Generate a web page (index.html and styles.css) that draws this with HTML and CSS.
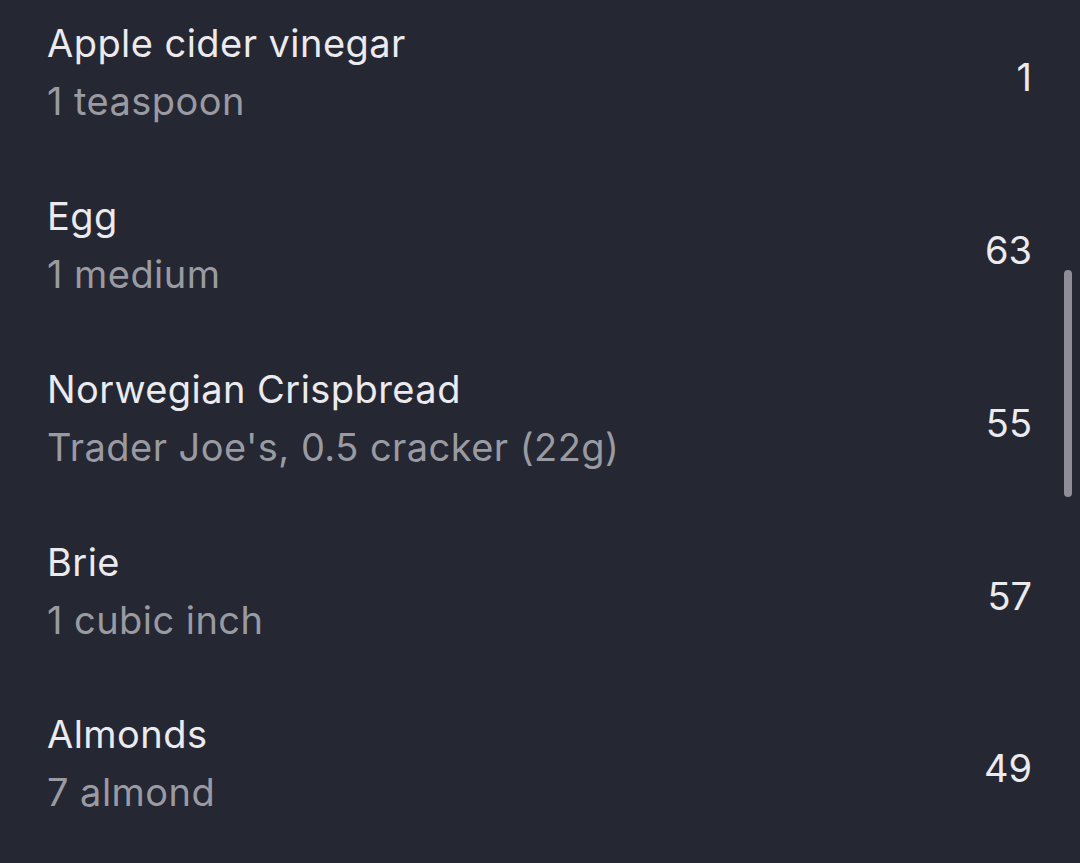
FILE: index.html
```html
<!DOCTYPE html>
<html>
<head>
<meta charset="utf-8">
<link rel="stylesheet" href="styles.css">
</head>
<body>
<div class="screen">
  <ul class="list">
    <li class="row">
      <div class="info"><div class="name">Apple cider vinegar</div><div class="serving">1 teaspoon</div></div>
      <div class="cal">1</div>
    </li>
    <li class="row">
      <div class="info"><div class="name">Egg</div><div class="serving">1 medium</div></div>
      <div class="cal">63</div>
    </li>
    <li class="row">
      <div class="info"><div class="name">Norwegian Crispbread</div><div class="serving">Trader Joe's, 0.5 cracker (22g)</div></div>
      <div class="cal">55</div>
    </li>
    <li class="row">
      <div class="info"><div class="name">Brie</div><div class="serving">1 cubic inch</div></div>
      <div class="cal">57</div>
    </li>
    <li class="row">
      <div class="info"><div class="name">Almonds</div><div class="serving">7 almond</div></div>
      <div class="cal">49</div>
    </li>
  </ul>
  <div class="scrollbar"></div>
</div>
</body>
</html>
```
FILE: styles.css
```css
html, body {
  margin: 0;
  padding: 0;
  background: #252733;
}
.screen {
  position: relative;
  width: 1080px;
  height: 863px;
  overflow: hidden;
  background: #252733;
  font-family: Inter, "Noto Sans", sans-serif;
}
.list {
  list-style: none;
  margin: -9px 0 0 0;
  padding: 0;
}
.row {
  height: 172.75px;
  display: flex;
  align-items: center;
  justify-content: space-between;
  padding: 0 48px 0 47px;
  box-sizing: border-box;
}
.info {
  display: flex;
  flex-direction: column;
  margin-bottom: 10px;
  letter-spacing: 0.45px;
}
.name {
  font-size: 38px;
  line-height: 58px;
  color: #ebebef;
}
.serving {
  font-size: 38px;
  line-height: 58px;
  color: #9a9ba2;
}
.cal {
  font-size: 38px;
  line-height: 58px;
  color: #ebebef;
}
.scrollbar {
  position: absolute;
  right: 8px;
  top: 270px;
  width: 8px;
  height: 227px;
  border-radius: 4px;
  background: #8e8f96;
}
```
